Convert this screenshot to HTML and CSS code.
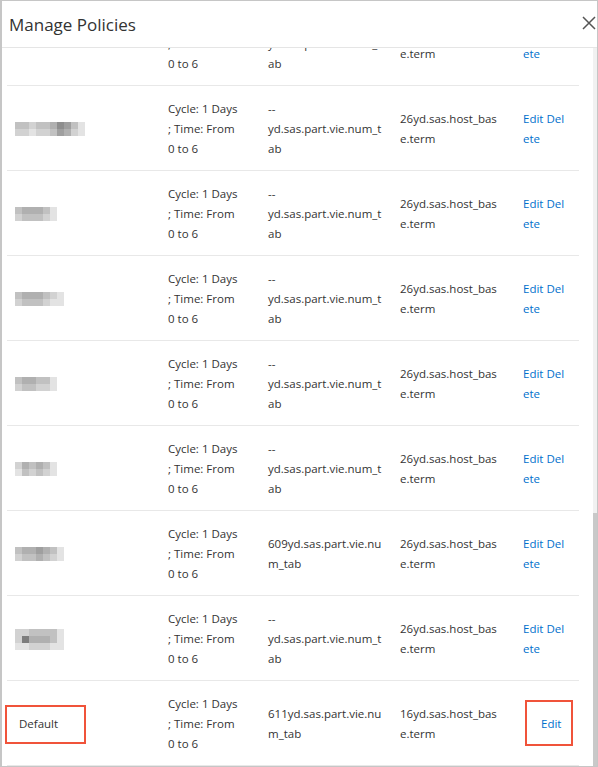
FILE: index.html
```html
<!DOCTYPE html>
<html lang="en">
<head>
    <meta charset="UTF-8">
    <meta name="viewport" content="width=device-width, initial-scale=1.0">
    <title>Manage Policies</title>
    <link rel="stylesheet" href="styles.css">
</head>
<body>
    <div class="modal">
        <div class="modal-header">
            <h2>Manage Policies</h2>
            <button class="close" aria-label="Close">
                <svg width="14" height="14" viewBox="0 0 14 14">
                    <path d="M1 1 L13 13 M13 1 L1 13" stroke="#555" stroke-width="1.5" fill="none"/>
                </svg>
            </button>
        </div>
        <div class="modal-body">
            <div class="list" id="lista">
                <table class="policies">
                    <colgroup>
                        <col class="col-name">
                        <col class="col-cycle">
                        <col class="col-target">
                        <col class="col-host">
                        <col class="col-actions">
                    </colgroup>
                    <tbody id="linhas"></tbody>
                </table>
            </div>
            <div class="scrollbar"><div class="thumb"></div></div>
        </div>
    </div>
    <script>
        const lista = document.getElementById("lista");
        const linhas = document.getElementById("linhas");

        const cycle = ["Cycle: 1 Days", "; Time: From", "0 to 6"];
        const target = ["--", "yd.sas.part.vie.num_t", "ab"];
        const host = ["26yd.sas.host_bas", "e.term"];

        // names are masked in the screenshot, one digit per block (0 light .. 9 dark)
        const visiveis = [
            { mask: [] },
            { mask: ["3323346531", "2212235421"] },
            { mask: ["344431", "233321"] },
            { mask: ["3444321", "2333211"] },
            { mask: ["344331", "233221"] },
            { mask: ["243431", "132321"] },
            { mask: ["3445431", "2334321"], target: ["609yd.sas.part.vie.nu", "m_tab"] },
            { mask: ["2233331", "2744431", "1122211"] },
            {
                name: "Default",
                target: ["611yd.sas.part.vie.nu", "m_tab"],
                host: ["16yd.sas.host_bas", "e.term"],
                single: true
            }
        ];

        // políticas acima da área visível (lista rolada até o fim)
        const policies = [];
        for (let i = 0; i < 15; i++) {
            policies.push({ mask: visiveis[1 + (i % 7)].mask });
        }
        policies.push(...visiveis);

        function desenharMascara(mask) {
            const rows = mask.map(row => {
                const cells = row.split("").map(d => {
                    const v = 244 - Number(d) * 17;
                    return `<span style="background: rgb(${v}, ${v}, ${v})"></span>`;
                }).join("");
                return `<div class="mask-row">${cells}</div>`;
            }).join("");
            return `<div class="mask">${rows}</div>`;
        }

        policies.forEach(p => {
            const tr = document.createElement("tr");
            const nome = p.name
                ? `<td class="name-cell"><span class="marked default">${p.name}</span></td>`
                : `<td>${desenharMascara(p.mask)}</td>`;
            const acoes = p.single
                ? `<td class="single"><a href="#" class="link marked edit">Edit</a></td>`
                : `<td><a href="#" class="link">Edit</a> <a href="#" class="link">Del<br>ete</a></td>`;
            tr.innerHTML = nome +
                `<td>${(p.cycle || cycle).join("<br>")}</td>` +
                `<td>${(p.target || target).join("<br>")}</td>` +
                `<td>${(p.host || host).join("<br>")}</td>` +
                acoes;
            linhas.appendChild(tr);
        });

        lista.scrollTop = lista.scrollHeight;
    </script>
</body>
</html>
```

FILE: styles.css
```css
* {
    box-sizing: border-box;
}
body {
    margin: 0;
    font-family: "Open Sans", Arial, sans-serif;
    color: #333;
    background: #fff;
}
.modal {
    width: 598px;
    height: 767px;
    border: 1px solid #c6c6c6;
    border-left-width: 2px;
    display: flex;
    flex-direction: column;
    background: #fff;
}
.modal-header {
    flex: none;
    height: 47px;
    border-bottom: 1px solid #e5e5e5;
    display: flex;
    align-items: center;
    justify-content: space-between;
    padding: 0 1px 0 7px;
}
.modal-header h2 {
    margin: 0;
    font-size: 17px;
    font-weight: normal;
    color: #333;
}
.close {
    border: none;
    background: none;
    padding: 0;
    width: 14px;
    height: 14px;
    margin-top: -3px;
    cursor: pointer;
}
.close svg {
    display: block;
}
.modal-body {
    flex: 1;
    min-height: 0;
    display: flex;
}
.list {
    flex: 1;
    overflow: hidden;
    padding: 0 14px 0 5px;
}
.scrollbar {
    flex: none;
    width: 4px;
    background: #f1f1f1;
    display: flex;
    flex-direction: column;
    justify-content: flex-end;
}
.thumb {
    height: 253px;
    background: #c9c9c9;
}

.policies {
    width: 572px;
    table-layout: fixed;
    border-collapse: separate;
    border-spacing: 0;
    font-size: 11.5px;
    line-height: 20px;
}
.col-name { width: 153px; }
.col-cycle { width: 100px; }
.col-target { width: 132px; }
.col-host { width: 123px; }
.col-actions { width: 64px; }

.policies td {
    height: 60px;
    padding: 13px 8px 11px;
    border-bottom: 1px solid #e8e8e8;
    vertical-align: middle;
    white-space: nowrap;
}
.policies td.name-cell {
    padding-left: 12px;
}
.policies td.single {
    padding-left: 26px;
}

.mask {
    display: flex;
    flex-direction: column;
}
.mask-row {
    display: flex;
}
.mask-row span {
    width: 7px;
    height: 7px;
}

.link {
    color: #0070cc;
    text-decoration: none;
}

/* caixas vermelhas de destaque */
.marked {
    position: relative;
    display: inline-block;
}
.marked::after {
    content: "";
    position: absolute;
    border: 2px solid #f0533a;
}
.default::after {
    left: -14px;
    right: -28px;
    top: -9px;
    bottom: -10px;
}
.edit::after {
    left: -16px;
    right: -12px;
    top: -14px;
    bottom: -12px;
}
```
